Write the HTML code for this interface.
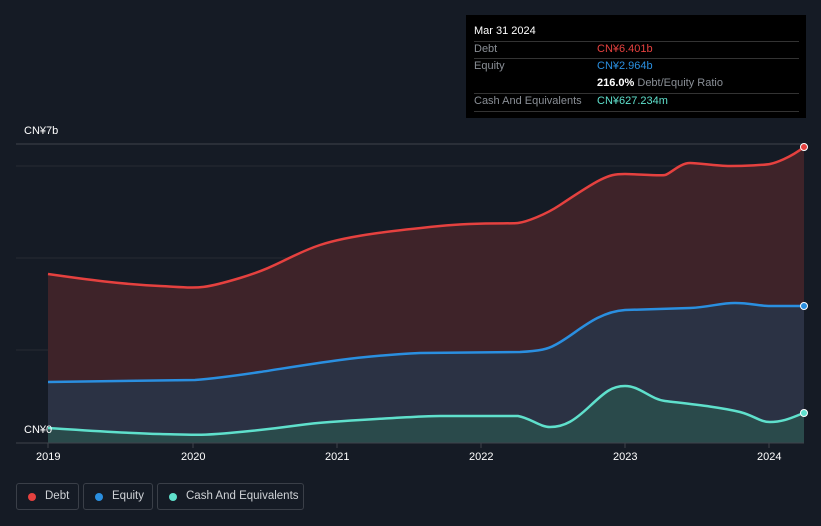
<!DOCTYPE html><html><head><style>
body{margin:0;width:821px;height:526px;background:#151b25;font-family:"Liberation Sans",sans-serif;overflow:hidden;position:relative}
.t{position:absolute;color:#fff;font-size:11px}
.tip{position:absolute;left:466px;top:15px;width:340px;height:103px;background:#000;}
.tip div{position:absolute;font-size:11px;color:#8a8f96;white-space:nowrap}
.hr{position:absolute;left:8px;width:325px;height:1px;background:#333}
.lg{position:absolute;top:483px;height:27px;border:1px solid #3a3f48;border-radius:3px;color:#cfd2d6;font-size:11.5px;line-height:25px;box-sizing:border-box;white-space:nowrap}
.lg i{position:absolute;left:11px;top:9px;width:8px;height:8px;border-radius:50%}
</style></head><body>
<svg width="821" height="526" style="position:absolute;left:0;top:0">
<line x1="16" y1="144" x2="804" y2="144" stroke="#3e434b"/>
<line x1="16" y1="166" x2="804" y2="166" stroke="#262b33"/>
<line x1="16" y1="258" x2="804" y2="258" stroke="#262b33"/>
<line x1="16" y1="350" x2="804" y2="350" stroke="#262b33"/>
<path d="M48,274 C90,280 120,284 160,286 S200,290 240,278 S290,255 320,245 S400,230 440,226 S510,224 518,223 S545,215 560,205 S590,185 600,180 S615,174 625,174 S660,176 665,175 S680,163 690,163 S715,166 730,166 S765,165 770,164 S790,158 804,147 L804,443 L48,443Z" fill="#3e2329"/>
<path d="M48,382 L195,380 C220,378 240,375 260,372 S310,364 340,360 S400,354 420,353 L520,352 C540,351 548,349 555,345 C575,335 595,312 625,310 L690,308 C710,307 720,303 735,303 S760,306 770,306 L804,306 L804,443 L48,443Z" fill="#2b3244"/>
<path d="M48,428 C80,430 120,433 160,434 S200,436 250,431 S300,424 330,422 S420,416 440,416 L518,416 C530,418 540,427 550,427 C565,427 575,420 590,406 C605,392 612,386 625,386 C640,386 650,399 665,401 C690,404 720,407 740,412 C755,416 760,422 770,422 C785,422 795,416 804,413 L804,443 L48,443Z" fill="#2a4a4b"/>
<path d="M48,274 C90,280 120,284 160,286 S200,290 240,278 S290,255 320,245 S400,230 440,226 S510,224 518,223 S545,215 560,205 S590,185 600,180 S615,174 625,174 S660,176 665,175 S680,163 690,163 S715,166 730,166 S765,165 770,164 S790,158 804,147" fill="none" stroke="#e5413f" stroke-width="2.5"/>
<path d="M48,382 L195,380 C220,378 240,375 260,372 S310,364 340,360 S400,354 420,353 L520,352 C540,351 548,349 555,345 C575,335 595,312 625,310 L690,308 C710,307 720,303 735,303 S760,306 770,306 L804,306" fill="none" stroke="#2a8fe0" stroke-width="2.5"/>
<path d="M48,428 C80,430 120,433 160,434 S200,436 250,431 S300,424 330,422 S420,416 440,416 L518,416 C530,418 540,427 550,427 C565,427 575,420 590,406 C605,392 612,386 625,386 C640,386 650,399 665,401 C690,404 720,407 740,412 C755,416 760,422 770,422 C785,422 795,416 804,413" fill="none" stroke="#5fe0cc" stroke-width="2.5"/>
<line x1="16" y1="443" x2="804" y2="443" stroke="#3e434b"/>
<g stroke="#3e434b"><line x1="48" y1="443" x2="48" y2="448"/><line x1="193" y1="443" x2="193" y2="448"/><line x1="337" y1="443" x2="337" y2="448"/><line x1="481" y1="443" x2="481" y2="448"/><line x1="625" y1="443" x2="625" y2="448"/><line x1="769" y1="443" x2="769" y2="448"/></g>
<circle cx="804" cy="147" r="3.5" fill="#e5413f" stroke="#fff" stroke-width="1"/>
<circle cx="804" cy="306" r="3.5" fill="#2a8fe0" stroke="#fff" stroke-width="1"/>
<circle cx="804" cy="413" r="3.5" fill="#5fe0cc" stroke="#fff" stroke-width="1"/>
</svg>
<div class="t" style="left:24px;top:125px">CN¥7b</div>
<div class="t" style="left:24px;top:424px">CN¥0</div>
<div class="t" style="left:36px;top:451px">2019</div>
<div class="t" style="left:181px;top:451px">2020</div>
<div class="t" style="left:325px;top:451px">2021</div>
<div class="t" style="left:469px;top:451px">2022</div>
<div class="t" style="left:613px;top:451px">2023</div>
<div class="t" style="left:757px;top:451px">2024</div>
<div class="tip">
<div style="left:8px;top:10px;color:#fff">Mar 31 2024</div>
<div class="hr" style="top:26px"></div>
<div style="left:8px;top:28px">Debt</div><div style="left:131px;top:28px;color:#e5413f">CN¥6.401b</div>
<div class="hr" style="top:43px"></div>
<div style="left:8px;top:45px">Equity</div><div style="left:131px;top:45px;color:#2a8fe0">CN¥2.964b</div>
<div style="left:131px;top:62px"><b style="color:#fff">216.0%</b> Debt/Equity Ratio</div>
<div class="hr" style="top:78px"></div>
<div style="left:8px;top:80px">Cash And Equivalents</div><div style="left:131px;top:80px;color:#5fe0cc">CN¥627.234m</div>
<div class="hr" style="top:96px"></div>
</div>
<div class="lg" style="left:16px;width:63px"><i style="background:#e5413f"></i><span style="position:absolute;left:28px">Debt</span></div>
<div class="lg" style="left:83px;width:70px"><i style="background:#2a8fe0"></i><span style="position:absolute;left:28px">Equity</span></div>
<div class="lg" style="left:157px;width:147px"><i style="background:#5fe0cc"></i><span style="position:absolute;left:28px">Cash And Equivalents</span></div>
</body></html>
